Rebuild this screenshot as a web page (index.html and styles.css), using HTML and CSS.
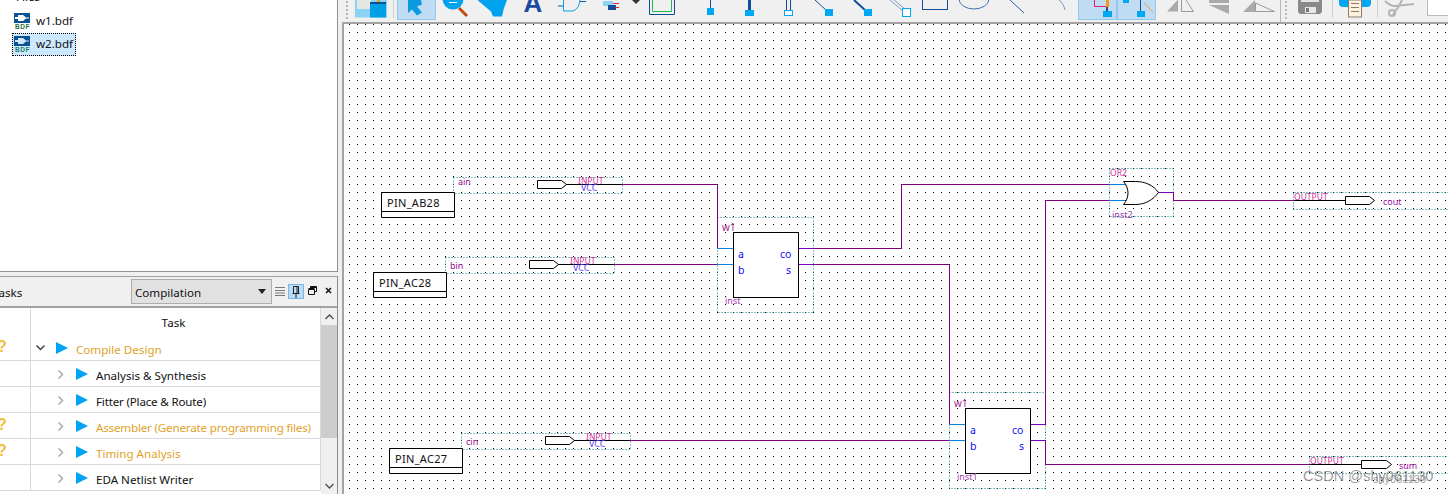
FILE: index.html
```html
<!DOCTYPE html>
<html lang="en">
<head>
<meta charset="utf-8">
<title>Quartus block diagram</title>
<link rel="stylesheet" href="styles.css">
</head>
<body>
<div class="app">
  <aside class="side">
    <section class="files">
      <div class="folder-row">
        <svg class="folder" width="8" height="8" viewBox="0 0 8 8"><rect x="0" y="0" width="8" height="3" fill="#f6d77c"/></svg>
        <span>Files</span>
      </div>
      <div class="file">
        <svg class="bdf" width="16" height="17" viewBox="0 0 16 17">
          <rect width="16" height="10" fill="#0a5094"/>
          <path d="M1 4h3V2h5l3 2.500h3v1h-3L9 8H4V6H1z" fill="#fff"/>
          <text class="bdf-text" x="1" y="16">BDF</text>
        </svg>
        <span>w1.bdf</span>
      </div>
      <div class="file selected">
        <svg class="bdf" width="16" height="17" viewBox="0 0 16 17">
          <rect width="16" height="10" fill="#0a5094"/>
          <path d="M1 4h3V2h5l3 2.500h3v1h-3L9 8H4V6H1z" fill="#cfe6fa"/>
          <text class="bdf-text alt" x="1" y="16">BDF</text>
        </svg>
        <span>w2.bdf</span>
      </div>
    </section>
    <section class="tasks">
      <header class="tasks-head">
        <span class="tasks-title">Tasks</span>
        <div class="combo">
          <span>Compilation</span>
          <svg width="8" height="5" viewBox="0 0 8 5"><path d="M0 0h8L4 5z" fill="#222"/></svg>
        </div>
        <svg class="menu-ico" width="10" height="9" viewBox="0 0 10 9"><path d="M0 .5h10M0 3.500h10M0 6h10M0 8.500h10" stroke="#777" fill="none"/></svg>
        <span class="pin-btn">
          <svg width="8" height="12" viewBox="0 0 8 12"><path d="M1.500.5h5v7h-5zM.5 7.500h7M4 7.500V12M5 1v6" stroke="#222" fill="none"/></svg>
        </span>
        <svg class="float-ico" width="9" height="9" viewBox="0 0 9 9"><path d="M2.500 2V.5h6v5H7M.5 3.500h6v5h-6zM.5 2.500h6M2.500 1.500h6" stroke="#111" fill="none"/></svg>
        <svg class="close-ico" width="7" height="7" viewBox="0 0 7 7"><path d="M1 1l5 5M6 1L1 6" stroke="#111" stroke-width="1.500" fill="none"/></svg>
      </header>
      <div class="task-body">
        <div class="task-table">
          <div class="task-row head"><span class="q"></span><span class="cell center">Task</span></div>
          <div class="task-row first warn">
            <span class="q">?</span>
            <span class="cell">
              <svg class="chev-down" width="9" height="6" viewBox="0 0 9 6"><path d="M.5.500l4 4 4-4" stroke="#444" stroke-width="1.500" fill="none"/></svg>
              <svg class="play" width="12" height="12" viewBox="0 0 12 12"><path d="M0 0l12 6-12 6z" fill="#00a2f2"/></svg>
              <span>Compile Design</span>
            </span>
          </div>
          <div class="task-row">
            <span class="q"></span>
            <span class="cell child">
              <svg class="chev" width="6" height="9" viewBox="0 0 6 9"><path d="M.5.500l4 4-4 4" stroke="#aaa" stroke-width="1.500" fill="none"/></svg>
              <svg class="play" width="12" height="12" viewBox="0 0 12 12"><path d="M0 0l12 6-12 6z" fill="#00a2f2"/></svg>
              <span>Analysis &amp; Synthesis</span>
            </span>
          </div>
          <div class="task-row">
            <span class="q"></span>
            <span class="cell child">
              <svg class="chev" width="6" height="9" viewBox="0 0 6 9"><path d="M.5.500l4 4-4 4" stroke="#aaa" stroke-width="1.500" fill="none"/></svg>
              <svg class="play" width="12" height="12" viewBox="0 0 12 12"><path d="M0 0l12 6-12 6z" fill="#00a2f2"/></svg>
              <span class="tight">Fitter (Place &amp; Route)</span>
            </span>
          </div>
          <div class="task-row warn">
            <span class="q">?</span>
            <span class="cell child">
              <svg class="chev" width="6" height="9" viewBox="0 0 6 9"><path d="M.5.500l4 4-4 4" stroke="#aaa" stroke-width="1.500" fill="none"/></svg>
              <svg class="play" width="12" height="12" viewBox="0 0 12 12"><path d="M0 0l12 6-12 6z" fill="#00a2f2"/></svg>
              <span class="tight">Assembler (Generate programming files)</span>
            </span>
          </div>
          <div class="task-row warn">
            <span class="q">?</span>
            <span class="cell child">
              <svg class="chev" width="6" height="9" viewBox="0 0 6 9"><path d="M.5.500l4 4-4 4" stroke="#aaa" stroke-width="1.500" fill="none"/></svg>
              <svg class="play" width="12" height="12" viewBox="0 0 12 12"><path d="M0 0l12 6-12 6z" fill="#00a2f2"/></svg>
              <span>Timing Analysis</span>
            </span>
          </div>
          <div class="task-row">
            <span class="q"></span>
            <span class="cell child">
              <svg class="chev" width="6" height="9" viewBox="0 0 6 9"><path d="M.5.500l4 4-4 4" stroke="#aaa" stroke-width="1.500" fill="none"/></svg>
              <svg class="play" width="12" height="12" viewBox="0 0 12 12"><path d="M0 0l12 6-12 6z" fill="#00a2f2"/></svg>
              <span>EDA Netlist Writer</span>
            </span>
          </div>
        </div>
        <div class="scrollbar">
          <svg class="sb-arrow" width="9" height="6" viewBox="0 0 9 6"><path d="M.5 5l4-4 4 4" stroke="#555" stroke-width="1.500" fill="none"/></svg>
          <div class="thumb"></div>
          <svg class="sb-arrow down" width="9" height="6" viewBox="0 0 9 6"><path d="M.5 1l4 4 4-4" stroke="#555" stroke-width="1.500" fill="none"/></svg>
        </div>
      </div>
    </section>
  </aside>

  <main class="main">
    <svg class="toolbar" width="1106" height="22" viewBox="342 0 1106 22">
      <g fill="#b4b4b4"><rect x="346" y="1" width="2" height="2"/><rect x="346" y="5" width="2" height="2"/><rect x="346" y="9" width="2" height="2"/><rect x="346" y="13" width="2" height="2"/><rect x="346" y="17" width="2" height="2"/></g>
      <rect x="355" y="0" width="32" height="17.500" fill="#8cd3f3"/>
      <rect x="357" y="0" width="14" height="9" fill="#e6e6e2"/>
      <rect x="370" y="2" width="16" height="15.500" fill="#00a0e6"/>
      <rect x="370" y="2" width="16" height="2" fill="#10508c"/>
      <rect x="377" y="0" width="3" height="2" fill="#e0a030"/>
      <path d="M393.500 0v18" stroke="#cfcfcf"/>

      <rect x="397.500" y="-2" width="38" height="21.500" fill="#bfdcf2" stroke="#90c8f0"/>
      <path d="M408 0v13l4-3.500 5 6 5-3-5-6 5-2-1-4.500z" fill="#0d9be0"/>

      <circle cx="453" cy="-1" r="10.500" fill="#00a2ee"/>
      <path d="M449 2.500h8" stroke="#fff"/>
      <path d="M459 8l8 8" stroke="#c24a12" stroke-width="3"/>

      <path d="M478 0h29l-3 8-2 8.500h-9l-2-5-13-11z" fill="#00a2ee"/>

      <text class="tb-a" x="523.500" y="12">A</text>

      <path d="M558 6h5" stroke="#0f58a8"/>
      <path d="M563.500 0v11h8c5 0 8-5 8.500-11" stroke="#00a2ee" fill="none"/>
      <path d="M580 1.500h6" stroke="#0f58a8"/>

      <rect x="603" y="1" width="10" height="5" fill="#8cd3f3"/>
      <rect x="608" y="5" width="8" height="5" fill="#0f4e96"/>
      <path d="M613 3.500h6M615 7.500h4" stroke="#d82828"/>
      <path d="M632 0h8l-4 4z" fill="#333"/>

      <path d="M649.500 0v14.500h25V0" fill="none" stroke="#0f4e96"/>
      <path d="M652.500 0v11.500h19V0" fill="none" stroke="#1db954"/>

      <path d="M710.500 0v8" stroke="#0f4e96"/><rect x="707" y="8" width="7" height="7" fill="#00a8f4"/>
      <path d="M749.500 0v10" stroke="#0f4e96" stroke-width="3"/><rect x="745" y="10" width="9" height="6" fill="#00a8f4"/>
      <path d="M786.500 0v10M790.500 0v10" stroke="#0f4e96"/><rect x="784.500" y="10.500" width="8" height="5" fill="#fff" stroke="#00a8f4"/>
      <path d="M815 0l11 10" stroke="#0f4e96"/><rect x="825" y="9" width="8" height="7" fill="#00a8f4"/>
      <path d="M854 0l11 10" stroke="#0f4e96" stroke-width="2"/><rect x="864" y="9" width="8" height="7" fill="#00a8f4"/>
      <path d="M890 0l13 11M894 0l11 9" stroke="#7d99c4"/><rect x="902.500" y="8.500" width="8" height="8" fill="#fff" stroke="#00a8f4"/>
      <rect x="922.500" y="-3" width="25" height="12.500" fill="none" stroke="#0f4e96"/>
      <ellipse cx="974" cy="-1" rx="15" ry="10" fill="none" stroke="#3f6fb5"/>
      <path d="M1010 0l14 13" stroke="#2a5aa8"/>
      <path d="M1059 0c3 2 5 6 6 10" stroke="#7d99c4" fill="none"/>

      <rect x="1078.500" y="-2" width="38" height="21.500" fill="#bfdcf2" stroke="#90c8f0"/>
      <rect x="1117.500" y="-2" width="38" height="21.500" fill="#bfdcf2" stroke="#90c8f0"/>
      <path d="M1094.500 0v6.500h14V0" fill="none" stroke="#e8206e"/>
      <rect x="1106" y="0" width="3" height="7" fill="#f59a0c"/>
      <rect x="1106" y="7" width="2" height="5" fill="#0f4e96"/>
      <rect x="1103" y="11" width="9" height="6" fill="#00a8f4"/>
      <rect x="1123" y="0" width="6" height="3" fill="#00a8f4"/>
      <path d="M1140.500 0v12" stroke="#0f4e96"/>
      <rect x="1137" y="11" width="8" height="6" fill="#00a8f4"/>
      <path d="M1144 3l9 9" stroke="#eda136"/>

      <path d="M1167 11.500l11-12v12z" fill="#aaa"/>
      <path d="M1181.500 0v11.500h12L1186 0" fill="none" stroke="#999"/>
      <rect x="1209" y="0" width="20" height="3" fill="#aaa"/>
      <path d="M1209 5h20v9z" fill="#aaa"/>
      <path d="M1243 12l12-12v12z" fill="#aaa"/>
      <path d="M1255.500 3v8.500h19z" fill="none" stroke="#999"/>

      <path d="M1280.500 0v22" stroke="#b8b8b8"/>
      <g fill="#bbb"><rect x="1285" y="1" width="2" height="2"/><rect x="1285" y="5" width="2" height="2"/><rect x="1285" y="9" width="2" height="2"/><rect x="1285" y="13" width="2" height="2"/><rect x="1285" y="17" width="2" height="2"/></g>

      <path d="M1298 0h24v12l-2 2h-20l-2-2z" fill="#8a8a8a"/>
      <rect x="1301" y="0" width="18" height="2" fill="#e4e4e4"/>
      <rect x="1305" y="7" width="11" height="6" fill="#e8e8e8"/>
      <rect x="1306" y="8" width="3" height="4" fill="#777"/>
      <path d="M1332.500 0v18M1377.500 0v18" stroke="#cfcfcf"/>

      <path d="M1339 0h32v3a4 4 0 0 1-4 4h-24a4 4 0 0 1-4-4z" fill="#00a8f4"/>
      <rect x="1348.500" y="0" width="13" height="17" fill="#fdf3dc" stroke="#8a7a70"/>
      <path d="M1351 3.500h8M1351 7.500h8M1351 11.500h8" stroke="#8a7a70"/>

      <path d="M1385 1c4 4 7 5 10 5l19-2M1402 0l-3 6c-2 3-5 6-6 9" fill="none" stroke="#b4b4b4" stroke-width="2"/>
      <circle cx="1392" cy="13" r="3" fill="none" stroke="#b4b4b4" stroke-width="2"/>
      <rect x="1427.500" y="-1" width="21" height="16.500" fill="#fff" stroke="#bbb"/>
    </svg>

    <svg class="canvas" width="1104" height="470" viewBox="344 24 1104 470">
      <defs>
        <pattern id="grid" x="349" y="24" width="8" height="8" patternUnits="userSpaceOnUse">
          <rect width="1" height="1" fill="#000"/>
        </pattern>
      </defs>
      <rect x="344" y="24" width="1104" height="470" fill="#fff"/>
      <rect x="344" y="24" width="1104" height="470" fill="url(#grid)"/>

      <!-- dotted symbol frames -->
      <g class="frame">
        <rect x="453.500" y="177.500" width="169" height="16"/>
        <rect x="445.500" y="257.500" width="169" height="16"/>
        <rect x="461.500" y="433.500" width="169" height="16"/>
        <rect x="717.500" y="217.500" width="96" height="95"/>
        <rect x="949.500" y="392.500" width="96" height="96"/>
        <rect x="1109.500" y="168.500" width="64" height="48"/>
        <path d="M1293.500 209.500v-17H1448M1293.500 209.500H1448"/>
        <path d="M1309.500 473.500v-17H1448M1309.500 473.500H1448"/>
      </g>

      <!-- wires -->
      <g class="wire">
        <path d="M622 184.500h95.500V248.500"/>
        <path d="M614 264.500h104"/>
        <path d="M813 248.500h88.500V184.500H1110"/>
        <path d="M813 264.500h136.500V424.500"/>
        <path d="M630 440.500h320"/>
        <path d="M1045.500 424.500V200.500H1110"/>
        <path d="M1030 440.500h15.500V464.500H1310"/>
        <path d="M1173.500 192.500V200.500H1294"/>
      </g>
      <g class="wire-in">
        <path d="M717 248.500h16M717 264.500h16"/>
        <path d="M949 424.500h16M949 440.500h16"/>
        <path d="M1109 184.500h16M1109 200.500h16"/>
      </g>
      <g class="wire-out">
        <path d="M798 248.500h15M798 264.500h15"/>
        <path d="M1030 424.500h15M1030 440.500h15"/>
        <path d="M1158 192.500h15"/>
      </g>
      <g class="wire-pin">
        <path d="M566 184.500h56M558 264.500h56M574 440.500h56"/>
        <path d="M1294 200.500h51M1310 464.500h51"/>
      </g>

      <!-- pins -->
      <g class="sym">
        <path d="M537.500 180.500h24l5 4-5 4h-24z"/>
        <path d="M529.500 260.500h24l5 4-5 4h-24z"/>
        <path d="M545.500 436.500h24l5 4-5 4h-24z"/>
        <path d="M1345.500 196.500h24l5 4-5 4h-24z"/>
        <path d="M1361.500 460.500h25l5 4-5 4h-25z"/>
        <rect x="733.500" y="232.500" width="65" height="65"/>
        <rect x="965.500" y="408.500" width="65" height="65"/>
        <path d="M1123.500 181.500h12c10 0 18 4 23 11-5 7-13 12-23 12h-12c6-7 6-16 0-23z"/>
      </g>

      <!-- location notes -->
      <g class="sym">
        <path d="M381.500 192.500h73v25h-73zM381.500 211.500h73"/>
        <path d="M373.500 272.500h73v25h-73zM373.500 291.500h73"/>
        <path d="M389.500 448.500h73v25h-73zM389.500 467.500h73"/>
      </g>
      <g class="loc">
        <text x="387" y="207">PIN_AB28</text>
        <text x="379" y="287">PIN_AC28</text>
        <text x="395" y="463">PIN_AC27</text>
      </g>

      <g class="name">
        <text x="458" y="185">ain</text>
        <text x="450" y="269">bin</text>
        <text x="466" y="445">cin</text>
        <text x="1383" y="205">cout</text>
        <text x="1399" y="469">sum</text>
      </g>
      <g class="ptype">
        <text x="578" y="184">INPUT</text>
        <text x="570" y="264">INPUT</text>
        <text x="586" y="440">INPUT</text>
        <text x="1294" y="200">OUTPUT</text>
        <text x="1310" y="464">OUTPUT</text>
        <text x="1110" y="176">OR2</text>
      </g>
      <g class="vcc">
        <text x="581" y="191">VCC</text>
        <text x="573" y="271">VCC</text>
        <text x="589" y="447">VCC</text>
      </g>
      <g class="block-name">
        <text x="722" y="231">w1</text>
        <text x="954" y="407">w1</text>
      </g>
      <g class="port">
        <text x="738" y="258">a</text>
        <text x="738" y="274">b</text>
        <text x="780" y="258">co</text>
        <text x="786" y="274">s</text>
        <text x="970" y="434">a</text>
        <text x="970" y="450">b</text>
        <text x="1012" y="434">co</text>
        <text x="1019" y="450">s</text>
      </g>
      <g class="inst">
        <text x="725" y="304">inst</text>
        <text x="957" y="480">inst1</text>
        <text x="1112" y="218">inst2</text>
      </g>
    </svg>
    <div class="watermark">CSDN @shy061130</div>
    <div class="watermark ghost">shy061130</div>
  </main>
</div>
</body>
</html>
```

FILE: styles.css
```css
* { box-sizing: border-box; }
html, body { margin: 0; height: 100%; overflow: hidden; background: #f0f0f0; }
body { font-family: "Noto Sans", "Liberation Sans", sans-serif; font-size: 11.600px; color: #111; }
svg { display: block; flex: none; }

.app { display: flex; width: 1448px; height: 494px; }

.side { width: 342px; flex: none; display: flex; flex-direction: column; }

.files {
  width: 338px; height: 272px; background: #fff;
  border-right: 1px solid #909090; border-bottom: 1px solid #909090;
  overflow: hidden; padding: 0 0 0 12px;
}
.folder-row { display: flex; align-items: center; gap: 8px; height: 20px; margin: -14px 0 4px -12px; }
.folder { margin-top: 8px; }
.file { display: flex; align-items: center; gap: 6px; width: 64px; height: 23px; padding-left: 2px; line-height: 1; }
.file > span { padding-bottom: 2px; }
.file.selected { background: #cce8ff; outline: 1px dotted #000; outline-offset: -1px; }
.bdf-text { font: bold 6.5px "Liberation Sans", sans-serif; letter-spacing: .6px; fill: #2f6f37; }
.bdf-text.alt { fill: #1c7f6c; }

.tasks { margin-top: 4px; width: 338px; flex: 1; min-height: 0; display: flex; flex-direction: column; border-top: 1px solid #a0a0a0; border-right: 1px solid #909090; background: #fff; overflow: hidden; }
.tasks-head { height: 31px; flex: none; display: flex; align-items: center; background: #f0f0f0; border-bottom: 2px solid #a0a0a0; }
.tasks-title { width: 131px; flex: none; margin-left: -7px; padding-top: 2px; }
.combo { margin-left: 7px; width: 141px; height: 25px; display: flex; align-items: center; justify-content: space-between; padding: 0 5px 0 3px; background: #e1e1e1; border: 1px solid #adadad; }
.combo > span { padding-top: 2px; }
.menu-ico { margin-left: 3px; }
.pin-btn { margin-left: 3px; width: 16px; height: 15px; display: flex; align-items: center; justify-content: center; background: #bcdcf5; border: 1px solid #7ab8e8; }
.float-ico { margin-left: 4px; margin-bottom: 3px; }
.close-ico { margin-left: 8px; margin-bottom: 3px; }

.task-body { flex: 1; min-height: 0; display: flex; }
.task-table { width: 321px; flex: none; }
.task-row { display: flex; height: 26px; border-bottom: 1px solid #d9d9d9; }
.task-row.head { height: 27px; border-bottom: none; }
.task-row.first { height: 26px; }
.q { width: 31px; flex: none; border-right: 1px solid #d9d9d9; color: #f5bd3e; font: bold 16px/24px "Liberation Sans", sans-serif; text-indent: -3px; overflow: hidden; }
.cell { flex: 1; min-width: 0; display: flex; align-items: center; white-space: nowrap; border-right: 1px solid #d9d9d9; padding: 3px 7px 0 0; }
.center { justify-content: center; padding: 1px 4px 0 0; }
.tight { letter-spacing: -.18px; }
.warn .cell > span { color: #dfa21f; }
.chev-down { margin-left: 5px; margin-right: 11px; margin-bottom: 2px; }
.chev { margin-left: 27px; margin-right: 12px; margin-bottom: 2px; }
.play { margin-bottom: 2px; margin-right: 8px; }

.scrollbar { width: 16px; flex: none; background: #f0f0f0; display: flex; flex-direction: column; align-items: center; }
.sb-arrow { margin: 6px 0 5px; }
.thumb { width: 100%; height: 114px; background: #cdcdcd; }
.sb-arrow.down { margin-top: 45px; }

.main { flex: 1; min-width: 0; position: relative; display: flex; flex-direction: column; overflow: hidden; }
.toolbar { height: 22px; background: #f0f0f0; }
.canvas { border-top: 2px solid #a3a3a3; border-left: 2px solid #a3a3a3; box-sizing: content-box; }

.frame rect, .frame path { fill: none; stroke: #008080; stroke-dasharray: 1 2; }
.wire path { fill: none; stroke: #800080; }
.wire-in path { fill: none; stroke: #0a84e0; }
.wire-out path { fill: none; stroke: #7a00c8; }
.wire-pin path { fill: none; stroke: #000; }
.sym path, .sym rect { fill: #fff; stroke: #000; }

.canvas text { font-family: "Noto Sans", "Liberation Sans", sans-serif; }
.loc text { font-size: 11px; fill: #111; letter-spacing: .3px; }
.name text { font-size: 9px; fill: #9b109b; }
.ptype text { font-size: 8.500px; fill: #d0309a; }
.vcc text { font-size: 9px; fill: #5a3cf0; }
.block-name text { font-size: 10px; fill: #a0208a; }
.port text { font-size: 10.500px; fill: #0a0aff; }
.inst text { font-size: 9px; fill: #a040b0; }
.tb-a { font: bold 26px "Liberation Sans", sans-serif; fill: #1b4aa0; }

.watermark { position: absolute; left: 961px; top: 468px; font: 14.500px "Liberation Sans", sans-serif; color: rgba(110, 110, 110, .7); white-space: nowrap; letter-spacing: .05px; }
.watermark.ghost { left: 1031px; top: 473px; font-size: 11px; color: rgba(90, 90, 90, .6); letter-spacing: 0; }
```
